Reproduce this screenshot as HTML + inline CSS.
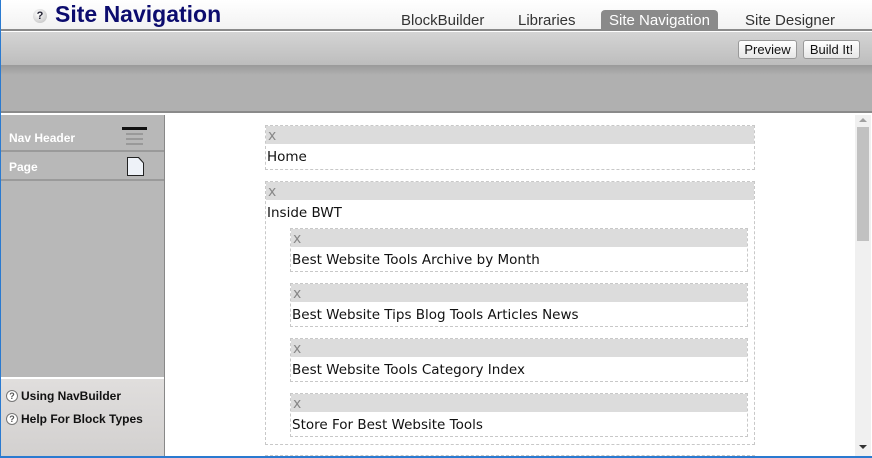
<!DOCTYPE html>
<html><head><style>
*{margin:0;padding:0;box-sizing:border-box}
html,body{width:872px;height:458px;overflow:hidden}
body{background:#fff;position:relative;font-family:"Liberation Sans",Arial,sans-serif}
.abs{position:absolute}
#frame{position:absolute;left:0;top:0;width:872px;height:458px;border-left:1px solid #2a7ad0;border-bottom:2px solid #2a7ad0;pointer-events:none;z-index:9}
#head{left:0;top:0;width:872px;height:31px;background:linear-gradient(#fff,#f2f2f2);border-bottom:2px solid #8a8a8a}
#title{left:55px;top:1px;font-size:23px;font-weight:bold;color:#0c0c6e}
#q{left:33px;top:9px;width:14px;height:14px;border-radius:50%;background:radial-gradient(circle at 40% 35%,#fff,#bbb);font-size:11px;font-weight:bold;color:#223;text-align:center;line-height:14px}
.tab{top:12px;font-size:15px;color:#333}
#tabsel{left:601px;top:10px;width:117px;height:20px;background:#8a8a8a;color:#fff;border-radius:4px 4px 0 0;text-align:center;font-size:15px;line-height:21px}
#tool{left:0;top:32px;width:872px;height:33px;background:linear-gradient(#d4d4d4,#bdbdbd)}
#tool2{left:0;top:65px;width:872px;height:48px;background:linear-gradient(#9a9a9a,#b0b0b0 10px,#b0b0b0);border-bottom:2px solid #8a8a8a}
.btn{top:40px;height:19px;background:linear-gradient(#fff,#e6e6e6);border:1px solid #999;border-radius:3px;font-size:13px;line-height:17px;text-align:center;color:#111}
#side{left:0;top:115px;width:165px;height:343px;background:#b8b8b8;border-right:1px solid #888}
.si{left:0;width:164px;height:29px;border-bottom:2px solid #9a9a9a;color:#fff;font-weight:bold;font-size:12px;padding:0 9px;line-height:30px}
#help{left:0;top:377px;width:164px;height:81px;background:linear-gradient(#e0dedd,#d2d0cf);border-top:2px solid #fff}
.h{left:6px;font-size:12px;font-weight:bold;color:#111}
.h span{display:inline-block;width:12px;height:12px;border:1px solid #777;border-radius:50%;font-size:9px;line-height:10px;text-align:center;margin-right:3px;color:#555;background:#fff;vertical-align:1px}
.box{border:1px dashed #c8c8c8;position:absolute;overflow:hidden}
.bar{height:18px;background:#dcdcdc;color:#888;font-size:14px;padding-left:2px;line-height:20px;font-family:"DejaVu Sans",sans-serif}
.t{font-family:"DejaVu Sans",sans-serif;font-size:13.5px;color:#111;padding-left:1px;line-height:26px}
#sb{left:855px;top:115px;width:16px;height:341px;background:#f0f0f0}
</style></head><body>
<div id="frame"></div>
<div class="abs" id="head"></div>
<div class="abs" id="q">?</div>
<div class="abs" id="title">Site Navigation</div>
<div class="abs tab" style="left:401px">BlockBuilder</div>
<div class="abs tab" style="left:518px">Libraries</div>
<div class="abs" id="tabsel">Site Navigation</div>
<div class="abs tab" style="left:745px">Site Designer</div>
<div class="abs" id="tool"></div>
<div class="abs" id="tool2"></div>
<div class="abs btn" style="left:738px;width:59px">Preview</div>
<div class="abs btn" style="left:803px;width:57px">Build It!</div>
<div class="abs" id="side">
<div class="abs si" style="top:8px">Nav Header</div>
<div class="abs si" style="top:37px">Page</div>
</div>
<div class="abs" style="left:122px;top:127px;width:25px;height:3px;background:#111"></div>
<div class="abs" style="left:126px;top:133px;width:17px;height:2px;background:#999"></div>
<div class="abs" style="left:126px;top:138px;width:17px;height:2px;background:#999"></div>
<div class="abs" style="left:126px;top:143px;width:17px;height:2px;background:#999"></div>
<div class="abs" style="left:127px;top:157px;width:17px;height:19px;background:#222;clip-path:polygon(0 0,70% 0,100% 30%,100% 100%,0 100%)"></div>
<div class="abs" style="left:128px;top:158px;width:15px;height:17px;background:#eef2f8;clip-path:polygon(0 0,68% 0,100% 30%,100% 100%,0 100%)"></div>
<div class="abs" id="help"></div>
<div class="abs h" style="top:389px"><span>?</span>Using NavBuilder</div>
<div class="abs h" style="top:412px"><span>?</span>Help For Block Types</div>
<div class="box" style="left:265px;top:125px;width:490px;height:45px"><div class="bar">x</div><div class="t">Home</div></div>
<div class="box" style="left:265px;top:181px;width:490px;height:264px"><div class="bar">x</div><div class="t">Inside BWT</div></div>
<div class="box" style="left:290px;top:228px;width:458px;height:44px"><div class="bar">x</div><div class="t">Best Website Tools Archive by Month</div></div>
<div class="box" style="left:290px;top:283px;width:458px;height:44px"><div class="bar">x</div><div class="t">Best Website Tips Blog Tools Articles News</div></div>
<div class="box" style="left:290px;top:338px;width:458px;height:44px"><div class="bar">x</div><div class="t">Best Website Tools Category Index</div></div>
<div class="box" style="left:290px;top:393px;width:458px;height:44px"><div class="bar">x</div><div class="t">Store For Best Website Tools</div></div>
<div class="box" style="left:265px;top:455px;width:490px;height:3px;border-bottom:0"></div>
<div class="abs" id="sb"></div>
<div class="abs" style="left:857px;top:127px;width:12px;height:114px;background:#c1c1c1"></div>
<div class="abs" style="left:859px;top:118px;width:0;height:0;border:4px solid transparent;border-bottom:4px solid #a0a0a0;border-top:0"></div>
<div class="abs" style="left:859px;top:445px;width:0;height:0;border:4px solid transparent;border-top:4px solid #333;border-bottom:0"></div>
</body></html>
